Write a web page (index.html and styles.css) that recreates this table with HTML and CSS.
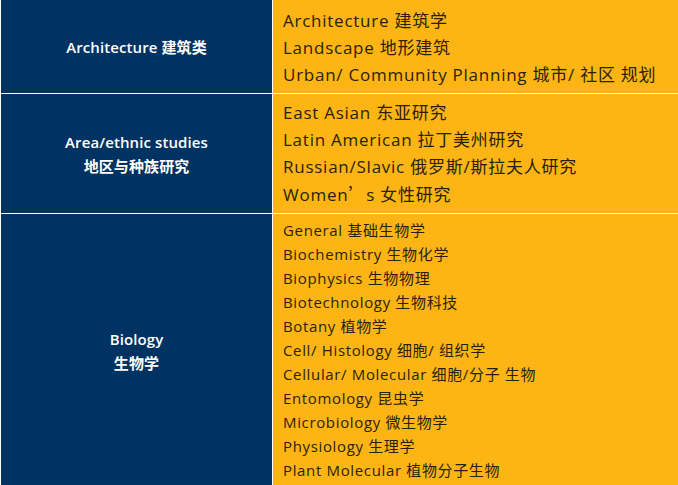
FILE: index.html
```html
<!DOCTYPE html>
<html lang="zh-CN">
<head>
<meta charset="utf-8">
<link rel="stylesheet" href="styles.css">
</head>
<body>
<div class="table">
  <div class="cat row1">Architecture 建筑类</div>
  <div class="list big row1">
    <div>Architecture 建筑学</div>
    <div>Landscape 地形建筑</div>
    <div>Urban/ Community Planning 城市/ 社区 规划</div>
  </div>
  <div class="cat row2"><div>Area/ethnic studies</div><div>地区与种族研究</div></div>
  <div class="list big row2">
    <div>East Asian 东亚研究</div>
    <div>Latin American 拉丁美州研究</div>
    <div>Russian/Slavic 俄罗斯/斯拉夫人研究</div>
    <div>Women<span class="cjk">’</span>s 女性研究</div>
  </div>
  <div class="cat row3"><div>Biology</div><div>生物学</div></div>
  <div class="list small row3">
    <div>General 基础生物学</div>
    <div>Biochemistry 生物化学</div>
    <div>Biophysics 生物物理</div>
    <div>Biotechnology 生物科技</div>
    <div>Botany 植物学</div>
    <div>Cell/ Histology 细胞/ 组织学</div>
    <div>Cellular/ Molecular 细胞/分子 生物</div>
    <div>Entomology 昆虫学</div>
    <div>Microbiology 微生物学</div>
    <div>Physiology 生理学</div>
    <div>Plant Molecular 植物分子生物</div>
  </div>
</div>
</body>
</html>
```
FILE: styles.css
```css
html, body {
  margin: 0;
  padding: 0;
  background: #ffffff;
}
body {
  width: 678px;
  height: 485px;
  overflow: hidden;
  font-family: "Open Sans", "Noto Sans CJK SC", sans-serif;
}
.table {
  display: grid;
  grid-template-columns: 271px 1fr;
  column-gap: 1px;
  row-gap: 1px;
  padding-left: 1px;
  background: #ffffff;
}
.cat {
  background: #003262;
  color: #ffffff;
  font-size: 15px;
  font-weight: 600;
  letter-spacing: 0.1px;
  line-height: 24px;
  display: flex;
  flex-direction: column;
  justify-content: center;
  align-items: center;
  text-align: center;
}
.list {
  background: #fdb515;
  color: #2a1f00;
  padding-left: 10px;
}
.big {
  font-size: 17px;
  line-height: 27px;
  letter-spacing: 0.75px;
}
.small {
  font-size: 15px;
  line-height: 24px;
  letter-spacing: 0.65px;
}
.row1.list { padding-top: 7px; padding-bottom: 5px; }
.row2.list { padding-top: 5px; padding-bottom: 5px; }
.row3.list { padding-top: 4px; padding-bottom: 6px; }
.cjk {
  font-family: "Noto Sans CJK SC", sans-serif;
}
```
